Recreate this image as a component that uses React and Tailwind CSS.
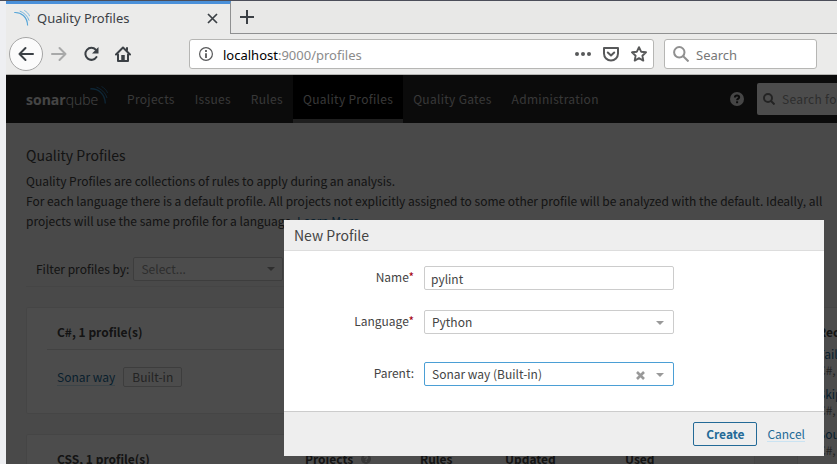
import React from "react";

const NAV = [
  { label: "Projects" },
  { label: "Issues" },
  { label: "Rules" },
  { label: "Quality Profiles", active: true },
  { label: "Quality Gates" },
  { label: "Administration" },
];

const RULES = ["Failed unit tests", "Skipped unit tests", "Source files"];

function Waves({ className }) {
  return (
    <svg className={className} viewBox="0 0 18 18" fill="none" stroke="currentColor" aria-hidden="true">
      <path d="M0.300 2.800C8 2.300 15 7.500 15.300 17.500" strokeWidth="1.300" />
      <path d="M6.500 1.200C11 2.800 15.300 6.500 17 12" strokeWidth="0.900" />
      <path d="M11.500 0.500C14 1.800 16.500 4 17.600 7" strokeWidth="0.800" />
    </svg>
  );
}

function Caret({ className }) {
  return (
    <svg className={className} viewBox="0 0 8 4" fill="currentColor" aria-hidden="true">
      <path d="M0 0h8L4 4z" />
    </svg>
  );
}

function HelpIcon({ className, mark }) {
  return (
    <svg className={className} viewBox="0 0 14 14" aria-hidden="true">
      <circle cx="7" cy="7" r="7" fill="currentColor" />
      <path d="M4.900 5.400C4.900 4 5.800 3.400 7 3.400s2.200.8 2.200 1.900C9.200 6.700 7.100 6.700 7.100 8.300" fill="none" stroke={mark} strokeWidth="2" />
      <rect x="6.100" y="9.300" width="2" height="1.900" fill={mark} />
    </svg>
  );
}

function Chrome() {
  return (
    <header className="font-['Noto_Sans',sans-serif] text-[13px] leading-[18px] text-[#3b4045]">
      <div className="flex h-[33px] bg-[#e8e8e7]">
        <div className="flex w-[225px] shrink-0 items-center border-t-[3px] border-r border-t-[#4a90d9] border-r-[#8f9091] bg-[#ebebea] pr-3 pb-0.5 pl-2">
          <Waves className="size-4 text-[#55a5d8]" />
          <span className="ml-[7px] flex-1">Quality Profiles</span>
          <button aria-label="Close tab">
            <svg className="size-[11px]" viewBox="0 0 11 11" stroke="currentColor" strokeWidth="1.700" fill="none">
              <path d="M1 1l9 9M10 1l-9 9" />
            </svg>
          </button>
        </div>
        <div className="flex flex-1 items-center border-b border-[#8f9091] pl-[9px]">
          <button aria-label="New tab">
            <svg className="size-[14px]" viewBox="0 0 14 14" stroke="currentColor" strokeWidth="2" fill="none">
              <path d="M7 0v14M0 7h14" />
            </svg>
          </button>
        </div>
      </div>
      <div className="flex h-[41px] items-center border-b border-[#b4b4b2] bg-[#ebebea] pr-5 pl-[3px]">
        <button aria-label="Back" className="flex size-[34px] items-center justify-center rounded-full border border-[#a5a5a5] bg-[#fbfbfb]">
          <svg className="size-4" viewBox="0 0 16 16" stroke="currentColor" strokeWidth="2" strokeLinecap="round" strokeLinejoin="round" fill="none">
            <path d="M15 8H1.500M7.500 2l-6 6 6 6" />
          </svg>
        </button>
        <button aria-label="Forward" className="ml-2 text-[#a8a9a9]">
          <svg className="size-4" viewBox="0 0 16 16" stroke="currentColor" strokeWidth="2" strokeLinecap="round" strokeLinejoin="round" fill="none">
            <path d="M1 8h13.500M8.500 2l6 6-6 6" />
          </svg>
        </button>
        <button aria-label="Reload" className="ml-4">
          <svg className="size-4" viewBox="0 0 16 16" fill="none">
            <path d="M12.800 3.800A6 6 0 1 0 13.500 11" stroke="currentColor" strokeWidth="2" strokeLinecap="round" />
            <path d="M15.500 1v6.500H9z" fill="currentColor" />
          </svg>
        </button>
        <button aria-label="Home" className="ml-4">
          <svg className="size-4" viewBox="0 0 16 16" fill="none" stroke="currentColor" strokeWidth="2" strokeLinejoin="round" strokeLinecap="round">
            <path d="M1 8.500L8 1.500l7 7" />
            <path d="M3 8.500V15h10V8.500" />
            <path d="M12 2v2" />
            <path d="M8 9v5" strokeWidth="3.500" strokeLinecap="butt" />
          </svg>
        </button>
        <div className="ml-[58px] flex h-[30px] flex-1 items-center rounded-[3px] border border-[#b6b6b4] bg-white pr-[6px] pl-[9px] text-[#58595a]">
          <svg className="size-[14px]" viewBox="0 0 14 14" fill="none" stroke="currentColor" aria-hidden="true">
            <circle cx="7" cy="7" r="6.400" strokeWidth="1.200" />
            <path d="M7 6.200V11M7 3v2" strokeWidth="1.800" />
          </svg>
          <span className="ml-[10px] flex-1 pt-0.5 text-[#8b8b8b]">
            <span className="text-black">localhost</span>:9000/profiles
          </span>
          <button aria-label="Page actions">
            <svg className="h-1 w-4" viewBox="0 0 16 4" fill="currentColor">
              <circle cx="2" cy="2" r="2" />
              <circle cx="8" cy="2" r="2" />
              <circle cx="14" cy="2" r="2" />
            </svg>
          </button>
          <button aria-label="Save to Pocket" className="ml-3">
            <svg className="size-4" viewBox="0 0 16 16" fill="none" stroke="currentColor" strokeWidth="2" strokeLinejoin="round" strokeLinecap="round">
              <path d="M1 2h14v5.500a7 7 0 0 1-14 0z" />
              <path d="M4.800 6.500L8 9.500l3.200-3" />
            </svg>
          </button>
          <button aria-label="Bookmark" className="ml-3">
            <svg className="size-4" viewBox="0 0 16 16" fill="none" stroke="currentColor" strokeWidth="1.900" strokeLinejoin="round">
              <path d="M8 1.200l2.100 4.500 4.900.6-3.600 3.400.9 4.900L8 12.200l-4.300 2.400.9-4.900L1 6.300l4.900-.6z" />
            </svg>
          </button>
        </div>
        <label className="ml-[10px] flex h-[30px] w-[153px] items-center rounded-[3px] border border-[#b6b6b4] bg-white pl-2">
          <svg className="size-4 shrink-0 text-[#909090]" viewBox="0 0 16 16" fill="none" stroke="currentColor" strokeWidth="2" aria-hidden="true">
            <circle cx="6.300" cy="6.300" r="5.200" />
            <path d="M10 10l5.500 5.500" />
          </svg>
          <input aria-label="Search the web" placeholder="Search" className="ml-[7px] w-full min-w-0 pt-0.5 outline-none placeholder:text-[#777777]" />
        </label>
      </div>
    </header>
  );
}

function Nav() {
  return (
    <nav className="flex h-12 items-center bg-[#262626] pl-5 text-[12px] tracking-wide text-[#bbbbbb]">
      <a href="#home" aria-label="SonarQube" className="mr-[9px] flex h-12 w-[82px] items-center font-['Open_Sans',sans-serif] text-[14px] tracking-normal">
        <span className="font-bold text-[#e6e6e6]">sonar</span>
        <span className="font-light text-[#e6e6e6]">qube</span>
        <Waves className="-ml-2 mb-2 size-[18px] shrink-0 text-[#2f7fb5]" />
      </a>
      {NAV.map((item) => (
        <a
          key={item.label}
          href="#nav"
          className={
            item.active
              ? "flex h-12 shrink-0 items-center border-b-4 border-[#6a6a6a] bg-black px-[10px] pt-1"
              : "flex h-12 shrink-0 items-center px-[10px]"
          }
        >
          {item.label}
        </a>
      ))}
      <HelpIcon className="ml-auto size-[14px] shrink-0 text-[#e6e6e6]" mark="#262626" />
      <label className="ml-[13px] flex h-8 w-20 shrink-0 items-center overflow-hidden rounded-l-[2px] bg-white pl-[6px]">
        <svg className="size-3 shrink-0 text-[#777777]" viewBox="0 0 12 12" fill="none" stroke="currentColor" strokeWidth="2" aria-hidden="true">
          <circle cx="5" cy="5" r="4" />
          <path d="M8 8l3.500 3.500" />
        </svg>
        <input aria-label="Search for projects" placeholder="Search for projects" className="ml-[7px] w-40 shrink-0 placeholder:text-[#999999]" />
      </label>
    </nav>
  );
}

function Page() {
  return (
    <main className="bg-[#f3f3f3] px-5 pt-[21px] text-[12px] text-[#444444]">
      <h1 className="text-[14px] leading-[22px]">Quality Profiles</h1>
      <p className="-mr-5 mt-[5px] leading-[20px]">
        Quality Profiles are collections of rules to apply during an analysis.
        <br />
        For each language there is a default profile. All projects not explicitly assigned to some other profile will be analyzed with the default. Ideally, all
        <br />
        projects will use the same profile for a language. <a href="#learn" className="text-[#236a97]">Learn More</a>
      </p>
      <div className="mt-[26px] flex items-center border-b border-[#e6e6e6] pb-[5px] pl-[10px]">
        <span>Filter profiles by:</span>
        <button aria-label="Filter profiles by language" className="ml-1 flex h-6 w-[150px] items-center justify-between rounded-[2px] border border-[#cccccc] bg-white px-[7px] text-[#999999]">
          Select...
          <Caret className="h-1 w-2" />
        </button>
      </div>
      <div className="-mr-5 mt-5 flex h-[200px] gap-[42px] overflow-hidden">
        <div className="flex flex-1 flex-col gap-5">
          <section className="h-[107px] shrink-0 rounded-[2px] border border-[#e6e6e6] bg-white px-5">
            <h2 className="h-[42px] border-b border-[#dddddd] px-[10px] pt-[14px] leading-[20px] font-bold">C#, 1 profile(s)</h2>
            <div className="flex items-center gap-2 px-[10px] pt-[17px]">
              <a href="#sonar-way" className="border-b border-[#cae3f2] leading-[17px] text-[#236a97]">Sonar way</a>
              <span className="rounded-[2px] border border-[#cccccc] px-2 leading-[18px] text-[#777777]">Built-in</span>
            </div>
          </section>
          <section className="h-[107px] shrink-0 rounded-[2px] border border-[#e6e6e6] bg-white px-5">
            <div className="flex px-[10px] pt-[14px] leading-[20px] font-bold">
              <h2 className="w-[248px]">CSS, 1 profile(s)</h2>
              <span className="flex w-[115px] items-center gap-2">
                Projects
                <HelpIcon className="size-[10px] text-[#b4b4b4]" mark="#ffffff" />
              </span>
              <span className="w-[85px]">Rules</span>
              <span className="w-[120px]">Updated</span>
              <span>Used</span>
            </div>
          </section>
        </div>
        <aside className="w-10 shrink-0 overflow-hidden border-t border-l border-[#e6e6e6] bg-[#ffffff] pt-[14px] pl-5 whitespace-nowrap">
          <h2 className="leading-[20px] font-bold">Recently Added Rules</h2>
          <ul className="mt-1">
            {RULES.map((rule) => (
              <li key={rule} className="mb-2 leading-4">
                <a href="#rule" className="block text-[#236a97]">{rule}</a>
                <span className="block text-[#777777]">C#, not yet activated</span>
              </li>
            ))}
          </ul>
        </aside>
      </div>
    </main>
  );
}

function Dialog() {
  return (
    <form role="dialog" aria-label="New Profile" className="w-[540px] bg-white text-[12px] leading-4 text-[#444444]">
      <h2 className="h-[31px] border-b border-[#dddddd] bg-[#eeeeee] px-[10px] text-[14px] leading-[30px]">New Profile</h2>
      <div className="grid grid-cols-[130px_250px] items-center gap-x-[10px] pt-[15px] pb-[25px]">
        <label htmlFor="profile-name" className="pb-0.5 text-right">
          Name<em className="not-italic text-[#a4030f]">*</em>
        </label>
        <input id="profile-name" defaultValue="pylint" className="h-6 rounded-[2px] border border-[#cccccc] px-[6px]" />
        <label htmlFor="profile-language" className="mt-5 pb-0.5 text-right">
          Language<em className="not-italic text-[#a4030f]">*</em>
        </label>
        <div className="relative mt-5">
          <select id="profile-language" className="block h-6 w-full appearance-none rounded-[2px] border border-[#cccccc] px-[7px]">
            <option>Python</option>
          </select>
          <Caret className="absolute top-[11px] right-[10px] h-1 w-2 text-[#999999]" />
        </div>
        <label htmlFor="profile-parent" className="mt-7 pb-0.5 text-right">Parent:</label>
        <div className="relative mt-7">
          <select id="profile-parent" className="block h-6 w-full appearance-none rounded-[2px] border border-[#4b9fd5] px-[7px]">
            <option>Sonar way (Built-in)</option>
          </select>
          <button type="button" aria-label="Clear parent" className="absolute top-[9px] right-[29px] text-[#999999]">
            <svg className="block size-[9px]" viewBox="0 0 9 9" stroke="currentColor" strokeWidth="2.600" fill="none">
              <path d="M1 1l7 7M8 1L1 8" />
            </svg>
          </button>
          <Caret className="absolute top-[11px] right-[10px] h-1 w-2 text-[#999999]" />
        </div>
      </div>
      <footer className="flex h-[45px] items-center justify-end gap-[10px] border-t border-[#cccccc] bg-[#eeeeee] pr-[19px]">
        <button type="button" className="h-6 w-16 rounded-[2px] border border-[#236a97] font-bold text-[#236a97]">Create</button>
        <a href="#cancel" className="border-b border-[#cae3f2] leading-[15px] text-[#236a97]">Cancel</a>
      </footer>
    </form>
  );
}

export default function App() {
  return (
    <div className="h-screen overflow-hidden border-t border-[#4b4e5a] bg-[#eeeff2] pl-[6px]">
      <Chrome />
      <div className="relative font-['Noto_Sans_CJK_SC',sans-serif]">
        <Nav />
        <Page />
        <div className="absolute inset-0 flex items-start justify-end bg-black/70 pt-[145px] pr-[13px]">
          <Dialog />
        </div>
      </div>
    </div>
  );
}
